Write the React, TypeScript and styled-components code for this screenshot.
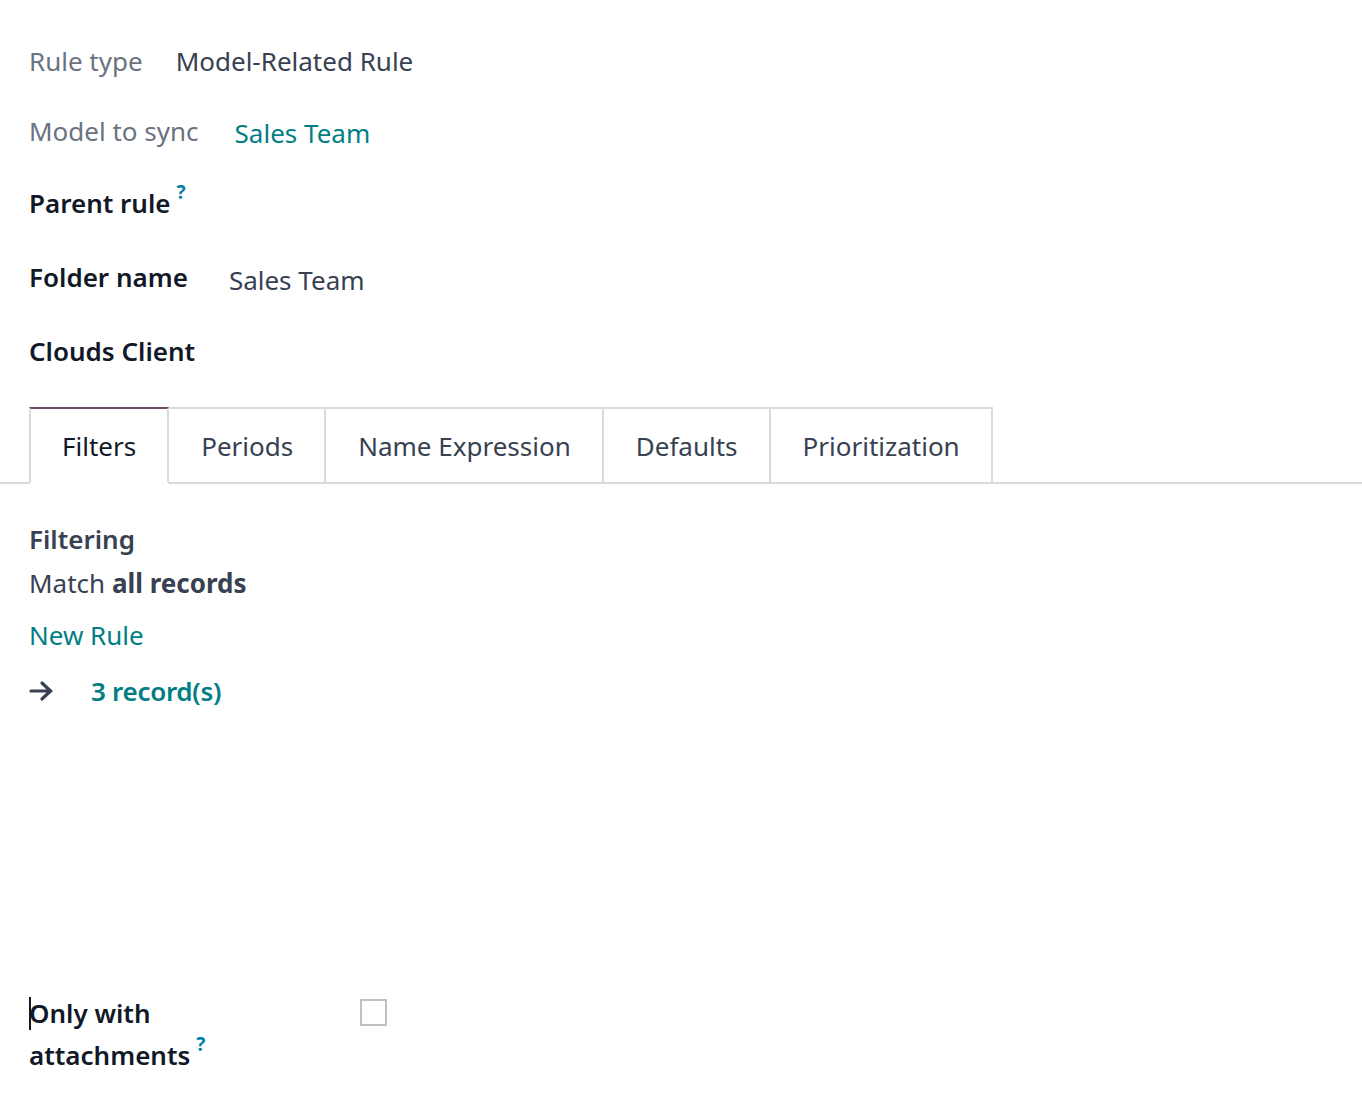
import React from "react";
import styled, { createGlobalStyle } from "styled-components";

const GlobalStyle = createGlobalStyle`
  html, body {
    margin: 0;
    padding: 0;
    background: #fff;
  }
  body {
    font-family: "Noto Sans", "Open Sans", sans-serif;
    font-size: 26px;
    color: #374151;
  }
`;

const Sheet = styled.div`
  padding: 41px 0 40px 29px;
  width: 1362px;
  box-sizing: border-box;
`;

const FieldRow = styled.div<{ $gap?: number; $mb?: number }>`
  display: flex;
  align-items: baseline;
  gap: ${(p) => p.$gap ?? 33}px;
  line-height: 40px;
  height: 40px;
  margin-bottom: ${(p) => p.$mb ?? 32}px;
`;

const Label = styled.span<{ $strong?: boolean }>`
  color: ${(p) => (p.$strong ? "#111827" : "#6b7280")};
  font-weight: ${(p) => (p.$strong ? 600 : 400)};
  white-space: nowrap;
`;

const Value = styled.span<{ $link?: boolean; $drop?: number }>`
  color: ${(p) => (p.$link ? "#017e84" : "#374151")};
  position: relative;
  top: ${(p) => p.$drop ?? 0}px;
`;

const Help = styled.span`
  position: relative;
  top: -14px;
  line-height: 0;
  color: #0180a5;
  font-size: 19px;
  font-weight: 700;
  margin-left: 6px;
`;

const TabBar = styled.ul`
  display: flex;
  list-style: none;
  margin: 36px 0 0 -29px;
  padding: 0 0 0 29px;
  border-bottom: 2px solid #d8dadd;
`;

const Tab = styled.li<{ $active?: boolean }>`
  height: 77px;
  box-sizing: border-box;
  padding: 0 31px 0 ${(p) => (p.$active ? 31 : 32)}px;
  display: flex;
  align-items: center;
  margin-bottom: -2px;
  color: ${(p) => (p.$active ? "#111827" : "#374151")};
  border: 2px solid #d8dadd;
  border-left-width: ${(p) => (p.$active ? 2 : 0)}px;
  border-top-color: ${(p) => (p.$active ? "#714b67" : "#d8dadd")};
  border-bottom-color: ${(p) => (p.$active ? "#fff" : "#d8dadd")};
  background: #fff;
`;

const Pane = styled.div`
  padding-top: 36px;
  height: 480px;
  box-sizing: border-box;
`;

const SectionTitle = styled.div`
  font-weight: 600;
  color: #374151;
  line-height: 38px;
`;

const Line = styled.div`
  line-height: 38px;
  margin-top: 6px;
  b {
    font-weight: 700;
  }
`;

const LinkLine = styled.div`
  color: #017e84;
  line-height: 38px;
  margin-top: 14px;
`;

const CountRow = styled.div`
  display: flex;
  align-items: center;
  gap: 36px;
  margin-top: 18px;
  line-height: 38px;
`;

const Count = styled.span`
  color: #017e84;
  font-weight: 600;
  letter-spacing: -0.3px;
`;

const BoolRow = styled.div`
  display: grid;
  grid-template-columns: 215px 1fr;
  column-gap: 116px;
  margin-top: 28px;
`;

const BoolLabel = styled.div`
  color: #111827;
  font-weight: 600;
  line-height: 42px;
`;

const Caret = styled.span`
  display: inline-block;
  width: 2px;
  height: 33px;
  margin-right: -2px;
  vertical-align: -7px;
  background: #111827;
`;

const Checkbox = styled.span`
  display: block;
  width: 27px;
  height: 27px;
  box-sizing: border-box;
  border: 2px solid #c0c0c0;
  margin-top: 7px;
`;

const ArrowIcon = () => (
  <svg width="26" height="22" viewBox="0 0 26 22" fill="none">
    <path
      d="M2 11h20M13 3l8.5 8L13 19"
      stroke="#374151"
      strokeWidth="3.2"
      strokeLinecap="round"
      strokeLinejoin="round"
    />
  </svg>
);

const tabs = ["Filters", "Periods", "Name Expression", "Defaults", "Prioritization"];

export default function App() {
  return (
    <>
      <GlobalStyle />
      <Sheet>
        <FieldRow $mb={30}>
          <Label>Rule type</Label>
          <Value>Model-Related Rule</Value>
        </FieldRow>
        <FieldRow $gap={36}>
          <Label>Model to sync</Label>
          <Value $link $drop={2}>
            Sales Team
          </Value>
        </FieldRow>
        <FieldRow $mb={34}>
          <Label $strong>
            Parent rule<Help>?</Help>
          </Label>
        </FieldRow>
        <FieldRow $gap={41} $mb={34}>
          <Label $strong>Folder name</Label>
          <Value $drop={3}>Sales Team</Value>
        </FieldRow>
        <FieldRow $mb={0}>
          <Label $strong>Clouds Client</Label>
        </FieldRow>

        <TabBar>
          {tabs.map((t, i) => (
            <Tab key={t} $active={i === 0}>
              {t}
            </Tab>
          ))}
        </TabBar>

        <Pane>
          <SectionTitle>Filtering</SectionTitle>
          <Line>
            Match <b>all records</b>
          </Line>
          <LinkLine>New Rule</LinkLine>
          <CountRow>
            <ArrowIcon />
            <Count>3 record(s)</Count>
          </CountRow>
        </Pane>

        <BoolRow>
          <BoolLabel>
            <Caret />
            Only with attachments<Help>?</Help>
          </BoolLabel>
          <Checkbox />
        </BoolRow>
      </Sheet>
    </>
  );
}
